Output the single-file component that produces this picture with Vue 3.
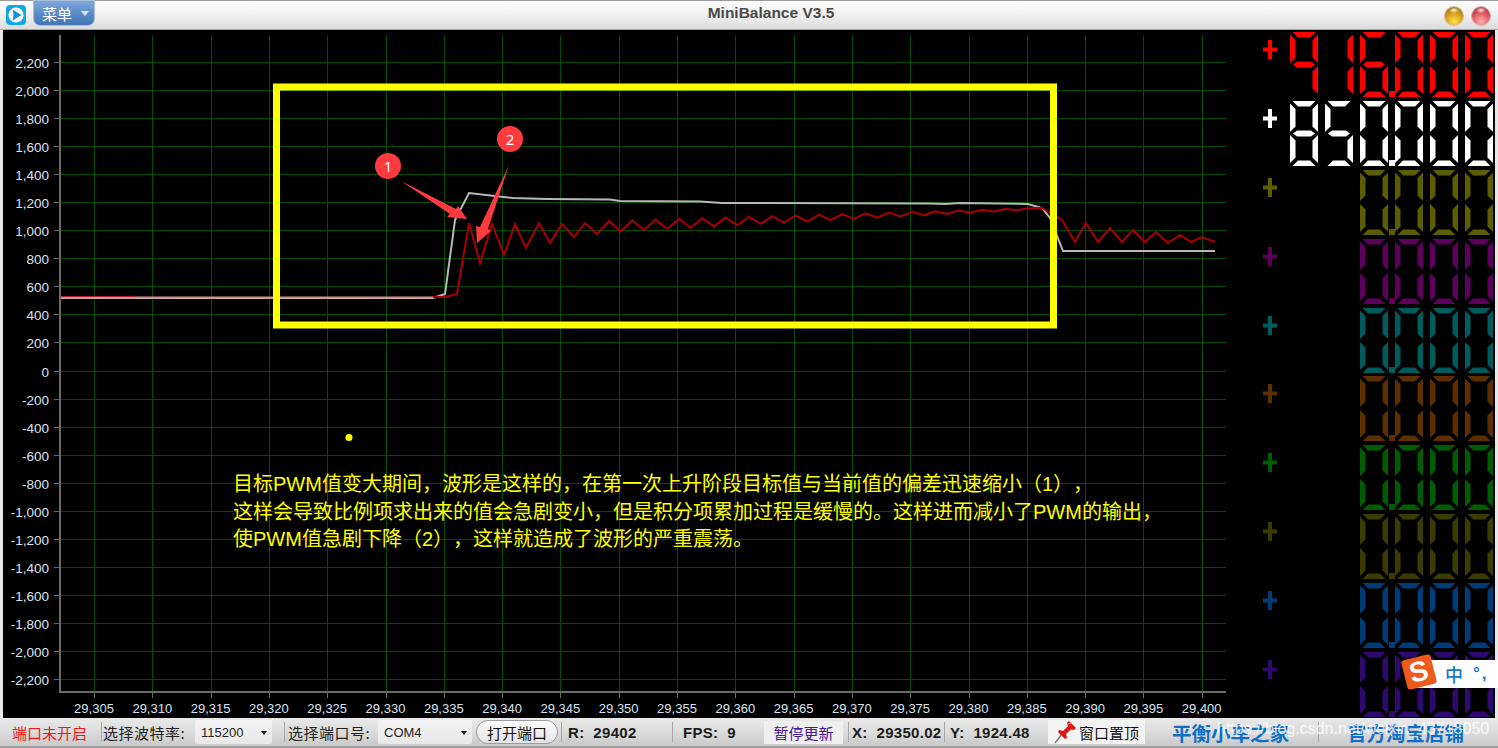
<script setup>
const k = 0.14023
const yOf = v => 370.5 - v * k
const xOf = v => 94 + (v - 29305) * 11.66

const yTicks = []
for (let v = 2200; v >= -2200; v -= 200) {
  const a = Math.abs(v)
  const s = a >= 1000 ? `${Math.floor(a / 1000)},${String(a % 1000).padStart(3, '0')}` : String(a)
  yTicks.push({ v, y: yOf(v), label: (v < 0 ? '-' : '') + s })
}
const xTicks = []
for (let v = 29305; v <= 29400; v += 5) {
  xTicks.push({ v, x: xOf(v), label: `29,${String(v - 29000).padStart(3, '0')}` })
}

const toPts = a => a.map(p => p.join(',')).join(' ')

const whiteLine = toPts([
  [61, 298], [433, 298], [445, 294], [455, 220], [469, 193], [513, 198], [547, 199], [610, 199.5], [620, 201],
  [700, 201.5], [722, 203], [930, 203.5], [945, 204], [960, 203], [1028, 204], [1042, 208], [1050, 218], [1063, 251], [1215, 251]
])

const redPts = [
  [433, 297], [445, 297], [457, 294], [469, 223], [480, 263], [492, 224], [504, 255], [515, 224],
  [526, 248], [539, 223], [550, 243], [562, 224], [574, 237], [585, 223], [597, 234]
]
let rx = 609
let ri = 0
while (rx < 1040) {
  const t = (rx - 610) / 430
  const peak = 221 - 13 * t
  const trough = 232 - 23 * t
  redPts.push([rx, +(ri % 2 === 0 ? peak : trough).toFixed(1)])
  rx += 11.66
  ri++
}
redPts.push([1042, 208], [1062, 220], [1075, 242], [1086, 223], [1098, 242], [1110, 228], [1122, 242], [1133, 230], [1145, 242], [1156, 232], [1168, 243], [1180, 235], [1191, 242], [1202, 237], [1215, 242])
const redLine = toPts(redPts)

const SEGS = {
  a: '2.500,0 25.500,0 20,5.500 8,5.500',
  b: '28,2.500 28,31 22.500,25.500 22.500,8',
  c: '28,34 28,62 22.500,56.500 22.500,39.500',
  d: '2.500,65 8,59.500 20,59.500 25.500,65',
  e: '0,34 5.500,39.500 5.500,56.500 0,62',
  f: '0,2.500 5.500,8 5.500,25.500 0,31',
  g: '3,32.500 7,29.500 21,29.500 25,32.500 21,35.500 7,35.500'
}
const MAP = {
  '0': 'abcdef', '1': 'bc', '5': 'acdfg', '6': 'acdefg', '8': 'abcdefg', '9': 'abcfg', ' ': ''
}
const rows = [
  { color: '#ff0000', digits: '916000' },
  { color: '#ffffff', digits: '850000' },
  { color: '#5c5c00', digits: '  0000' },
  { color: '#5c005c', digits: '  0000' },
  { color: '#005c5c', digits: '  0000' },
  { color: '#5c2e00', digits: '  0000' },
  { color: '#005c00', digits: '  0000' },
  { color: '#3c3c00', digits: '  0000' },
  { color: '#003c78', digits: '  0000' },
  { color: '#2e0a6e', digits: '  0000' }
].map(r => ({
  ...r,
  cells: r.digits.split('').map(c => MAP[c].split('').map(s => SEGS[s]))
}))
</script>

<template>
  <div class="win">
    <header class="titlebar">
      <svg class="app-icon" width="20" height="20" viewBox="0 0 20 20">
        <rect x="0" y="0" width="20" height="20" rx="4" fill="#12a6e2" />
        <circle cx="10" cy="10" r="7.600" fill="#fff" />
        <path d="M6.500 4.500 L15.500 10 L6.500 15.500 Q8.500 10 6.500 4.500Z" fill="#1290d8" />
      </svg>
      <div class="menu-btn">
        <span>菜单</span>
        <i class="menu-caret"></i>
      </div>
      <div class="title">MiniBalance V3.5</div>
      <div class="orb orb-min"></div>
      <div class="orb orb-close"></div>
    </header>

    <main class="body">
      <div class="chart">
        <svg class="plot" width="1223" height="688" viewBox="3 30 1223 688">
          <g stroke="#004e00" stroke-width="1" shape-rendering="crispEdges">
            <line v-for="t in yTicks" :key="t.v" x1="60" x2="1226" :y1="Math.round(t.y)" :y2="Math.round(t.y)" />
            <line v-for="t in xTicks" :key="t.v" y1="36" y2="692" :x1="Math.round(t.x)" :x2="Math.round(t.x)" />
          </g>
          <g stroke="#6a6a6a" stroke-width="1" shape-rendering="crispEdges">
            <line v-for="t in yTicks" :key="t.v" x1="54" x2="60" :y1="Math.round(t.y)" :y2="Math.round(t.y)" />
            <line v-for="t in xTicks" :key="t.v" y1="692" y2="698" :x1="Math.round(t.x)" :x2="Math.round(t.x)" />
          </g>
          <path d="M60 35 V692 H1227" fill="none" stroke="#6a6a6a" stroke-width="2" />
          <g class="ylabels">
            <text v-for="t in yTicks" :key="t.v" x="49" :y="t.y + 6" text-anchor="end">{{ t.label }}</text>
          </g>
          <g class="xlabels">
            <text v-for="t in xTicks" :key="t.v" :x="t.x" y="713" text-anchor="middle">{{ t.label }}</text>
          </g>
          <polyline :points="whiteLine" fill="none" stroke="#b8b8b8" stroke-width="2" />
          <polyline :points="redLine" fill="none" stroke="#a80000" stroke-width="2" />
          <line x1="61" x2="433" y1="297.500" y2="297.500" stroke="#d98c8c" stroke-width="2" />
          <line x1="61" x2="135" y1="296.500" y2="296.500" stroke="#b02030" stroke-width="1" />
          <rect x="276.500" y="87" width="777" height="238" fill="none" stroke="#ffff00" stroke-width="7" />
          <circle cx="349" cy="437.500" r="3.500" fill="#ffff00" />
          <g fill="#ff3b3f">
            <polygon points="401,181 456,209 458,206 467,219 447,217 450,214" />
            <polygon points="509,165 488,229 491,231 477,243 476,226 480,227" />
            <circle cx="388" cy="166" r="13" />
            <circle cx="510" cy="139" r="13" />
          </g>
          <g class="badge-num">
            <text x="388" y="171.500" text-anchor="middle">1</text>
            <text x="510" y="144.500" text-anchor="middle">2</text>
          </g>
        </svg>
        <div class="note">
          <div>目标PWM值变大期间，波形是这样的，在第一次上升阶段目标值与当前值的偏差迅速缩小（1），</div>
          <div>这样会导致比例项求出来的值会急剧变小，但是积分项累加过程是缓慢的。这样进而减小了PWM的输出，</div>
          <div>使PWM值急剧下降（2），这样就造成了波形的严重震荡。</div>
        </div>
      </div>

      <aside class="leds">
        <div v-for="(r, i) in rows" :key="i" class="led-row">
          <svg class="plus" width="14" height="19" viewBox="0 0 14 19">
            <path d="M5 0h4v7.500h5v4H9V19H5v-7.500H0v-4h5z" :fill="r.color" />
          </svg>
          <div class="digits">
            <svg v-for="(c, j) in r.cells" :key="j" class="digit" width="28" height="65" viewBox="0 0 28 65">
              <polygon v-for="(p, n) in c" :key="n" :points="p" :fill="r.color" />
            </svg>
            <svg class="dp" width="6" height="6" viewBox="0 0 6 6"><rect width="6" height="6" :fill="r.color" /></svg>
          </div>
        </div>
      </aside>
    </main>

    <footer class="status">
      <span class="st-red">端口未开启</span>
      <i class="sep sep-a"></i>
      <span class="st-label st-baud">选择波特率:</span>
      <div class="combo combo-baud"><span>115200</span><i class="caret"></i></div>
      <i class="sep sep-b"></i>
      <span class="st-label st-port">选择端口号:</span>
      <div class="combo combo-port"><span>COM4</span><i class="caret"></i></div>
      <button class="open-btn">打开端口</button>
      <i class="sep sep-c"></i>
      <span class="st-num st-r">R:&nbsp; 29402</span>
      <i class="sep sep-d"></i>
      <span class="st-num st-fps">FPS:&nbsp; 9</span>
      <div class="pause-btn">暂停更新</div>
      <i class="sep sep-e"></i>
      <span class="st-num st-x">X:&nbsp; 29350.02</span>
      <i class="sep sep-f"></i>
      <span class="st-num st-y">Y:&nbsp; 1924.48</span>
      <div class="pin-btn">
        <svg width="26" height="24" viewBox="0 0 26 24">
          <path d="M3 23 L10 14" stroke="#777" stroke-width="1.400" fill="none" />
          <path d="M7 10 L11 11 L16 6 L15 3 L17 1 L24 8 L22 10 L19 9.500 L14 14 L15 18 L13 19 L6 12 Z" fill="#e01414" />
          <path d="M16 4 L19 3" stroke="#ff9090" stroke-width="1.200" fill="none" />
        </svg>
        <span>窗口置顶</span>
      </div>
      <span class="brand brand-a">平衡小车之家</span>
      <i class="sep sep-g"></i>
      <span class="brand brand-b">官方淘宝店铺</span>
    </footer>

    <div class="watermark">https://blog.csdn.net/weixin_43718050</div>

    <div class="ime">
      <div class="ime-logo"><span>S</span></div>
      <span class="ime-text">中</span>
      <span class="ime-text ime-sym">°,</span>
    </div>
  </div>
</template>

<style>
html, body { margin: 0; background: #000; }
</style>

<style scoped>
.win {
  position: relative;
  width: 1498px;
  height: 748px;
  overflow: hidden;
  display: flex;
  flex-direction: column;
  background: #e8e8e8;
  font-family: "Noto Sans CJK SC", "Liberation Sans", sans-serif;
}
.titlebar {
  position: relative;
  height: 30px;
  flex: none;
  box-sizing: border-box;
  display: flex;
  align-items: flex-start;
  background: linear-gradient(#fdfdfd 0%, #f2f2f2 45%, #dcdcdc 100%);
  border-top: 1px solid #9a9a9a;
  border-bottom: 1px solid #a8a8a8;
}
.app-icon { margin: 4px 0 0 6px; flex: none; }
.menu-btn {
  margin-left: 8px;
  width: 60px;
  height: 24px;
  box-sizing: border-box;
  display: flex;
  align-items: center;
  padding-left: 8px;
  color: #fff;
  font-size: 15px;
  border-radius: 0 0 6px 6px;
  background: linear-gradient(#80a8dc, #5c8cc8 50%, #3f74b4);
  box-shadow: 0 0 0 1px #a8c0dc;
}
.menu-caret {
  margin-left: 9px;
  border: 4px solid transparent;
  border-top: 5px solid #dbe7f5;
  margin-top: 5px;
}
.title {
  position: absolute;
  left: 0;
  right: 0;
  top: 3px;
  padding-left: 44px;
  text-align: center;
  font: bold 15.500px "Liberation Sans", sans-serif;
  color: #4a4a4a;
}
.orb {
  position: absolute;
  top: 6px;
  width: 18px;
  height: 18px;
  border-radius: 50%;
}
.orb-min {
  left: 1445px;
  background:
    radial-gradient(ellipse 5px 3px at 50% 18%, #fff6d8 0, rgba(255, 246, 216, 0) 100%),
    radial-gradient(circle at 50% 80%, #ffe24a 0, #dca420 45%, #7c5a14 100%);
  box-shadow: 0 0 0 1px #c8b888;
}
.orb-close {
  left: 1472px;
  background:
    radial-gradient(ellipse 5px 3px at 50% 18%, #ffe8e8 0, rgba(255, 232, 232, 0) 100%),
    radial-gradient(circle at 50% 80%, #ffb0b0 0, #e25860 50%, #8c2028 100%);
  box-shadow: 0 0 0 1px #d8a8a8;
}
.body {
  flex: 1;
  min-height: 0;
  display: flex;
  margin: 0 3px;
  background: #000;
}
.chart {
  position: relative;
  width: 1223px;
  flex: none;
}
.plot { display: block; }
.ylabels text {
  font: 13.500px "Liberation Sans", sans-serif;
  fill: #dbe3f0;
}
.xlabels text {
  font: 13px "Liberation Sans", sans-serif;
  fill: #dbe3f0;
}
.badge-num text {
  font: 15px "Noto Sans", sans-serif;
  fill: #fff;
}
.note {
  position: absolute;
  left: 230px;
  top: 441px;
  color: #ffff00;
  font-family: "Liberation Sans", "Noto Sans CJK SC", sans-serif;
  font-size: 20px;
  line-height: 27.500px;
  white-space: nowrap;
  text-spacing-trim: space-all;
}
.leds {
  flex: 1;
  display: flex;
  flex-direction: column;
  gap: 3.900px;
  padding-top: 2px;
}
.led-row {
  display: flex;
  align-items: flex-start;
  height: 65px;
}
.plus { margin: 8px 0 0 37px; flex: none; }
.digits {
  position: relative;
  display: flex;
  gap: 7px;
  margin-left: 13px;
}
.digit { display: block; flex: none; }
.dp {
  position: absolute;
  left: 99px;
  top: 59px;
}
.status {
  height: 30px;
  flex: none;
  box-sizing: border-box;
  display: flex;
  align-items: center;
  padding-left: 12px;
  font-size: 15px;
  color: #222;
  white-space: nowrap;
  background: linear-gradient(#e9e9e9, #dcdcdc 50%, #c9c9c9);
  border-bottom: 2px solid #a0a0a0;
}
.st-red { color: #f01818; width: 75px; flex: none; }
.sep {
  display: block;
  flex: none;
  width: 1px;
  height: 20px;
  background: #a8a8a8;
}
.sep-a { margin-left: 14px; }
.st-label { width: 84px; flex: none; letter-spacing: 0.500px; }
.st-baud { margin-left: 1px; }
.combo {
  flex: none;
  height: 24px;
  box-sizing: border-box;
  display: flex;
  align-items: center;
  justify-content: space-between;
  padding: 0 5px 0 6px;
  font: 13px "Liberation Sans", sans-serif;
  background: linear-gradient(#f4f4f4, #e8e8e8);
  border-radius: 2px;
}
.caret {
  border: 3.500px solid transparent;
  border-top: 4px solid #111;
  margin-top: 5px;
}
.combo-baud { margin-left: 8px; width: 77px; }
.sep-b { margin-left: 12px; }
.st-port { margin-left: 3px; }
.combo-port { margin-left: 6px; width: 94px; }
.open-btn {
  margin-left: 4px;
  width: 82px;
  height: 24px;
  flex: none;
  padding: 0;
  font: inherit;
  color: #111;
  background: linear-gradient(#fbfbfb, #e4e4e4);
  border: 1px solid #9c9c9c;
  border-radius: 12px;
}
.sep-c { margin-left: 3px; }
.st-num {
  flex: none;
  overflow: hidden;
  font: bold 15px "Liberation Sans", sans-serif;
  letter-spacing: 0.300px;
  color: #1c1c1c;
}
.st-r { margin-left: 6px; width: 100px; }
.sep-d { margin-left: 4px; }
.st-fps { margin-left: 10px; width: 60px; }
.pause-btn {
  margin-left: 21px;
  width: 79px;
  height: 23px;
  flex: none;
  line-height: 23px;
  text-align: center;
  color: #48189c;
  background: #efefef;
}
.sep-e { margin-left: 5px; }
.st-x { margin-left: 3px; width: 90px; }
.sep-f { margin-left: 2px; }
.st-y { margin-left: 5px; width: 80px; }
.pin-btn {
  margin-left: 18px;
  width: 97px;
  height: 24px;
  flex: none;
  box-sizing: border-box;
  padding-left: 4px;
  display: flex;
  align-items: center;
  gap: 1px;
  background: #f3f3f3;
  color: #111;
}
.brand {
  flex: none;
  width: 118px;
  font-size: 19.500px;
  font-weight: 700;
  color: #0f6fc6;
}
.brand-a { margin-left: 27px; }
.sep-g { margin-left: 28px; }
.brand-b { margin-left: 28px; }
.watermark {
  position: absolute;
  left: 1217px;
  top: 720px;
  font: 16px "Liberation Sans", sans-serif;
  color: rgba(255, 255, 255, 0.75);
  white-space: nowrap;
}
.ime {
  position: absolute;
  left: 1412px;
  top: 660px;
  width: 86px;
  height: 28px;
  background: #fff;
  display: flex;
  align-items: center;
  padding-left: 33px;
  box-sizing: border-box;
  gap: 10px;
  color: #1878c8;
}
.ime-logo {
  position: absolute;
  left: -8px;
  top: -3px;
  width: 30px;
  height: 30px;
  border-radius: 3px;
  background: #ef5a1c;
  transform: rotate(-14deg);
  display: flex;
  align-items: center;
  justify-content: center;
  color: #fff;
  font: 900 28px "Liberation Sans", sans-serif;
}
.ime-text { font-size: 18px; font-weight: 500; }
.ime-sym { font: bold 17px "Liberation Sans", sans-serif; letter-spacing: 2px; }
</style>
